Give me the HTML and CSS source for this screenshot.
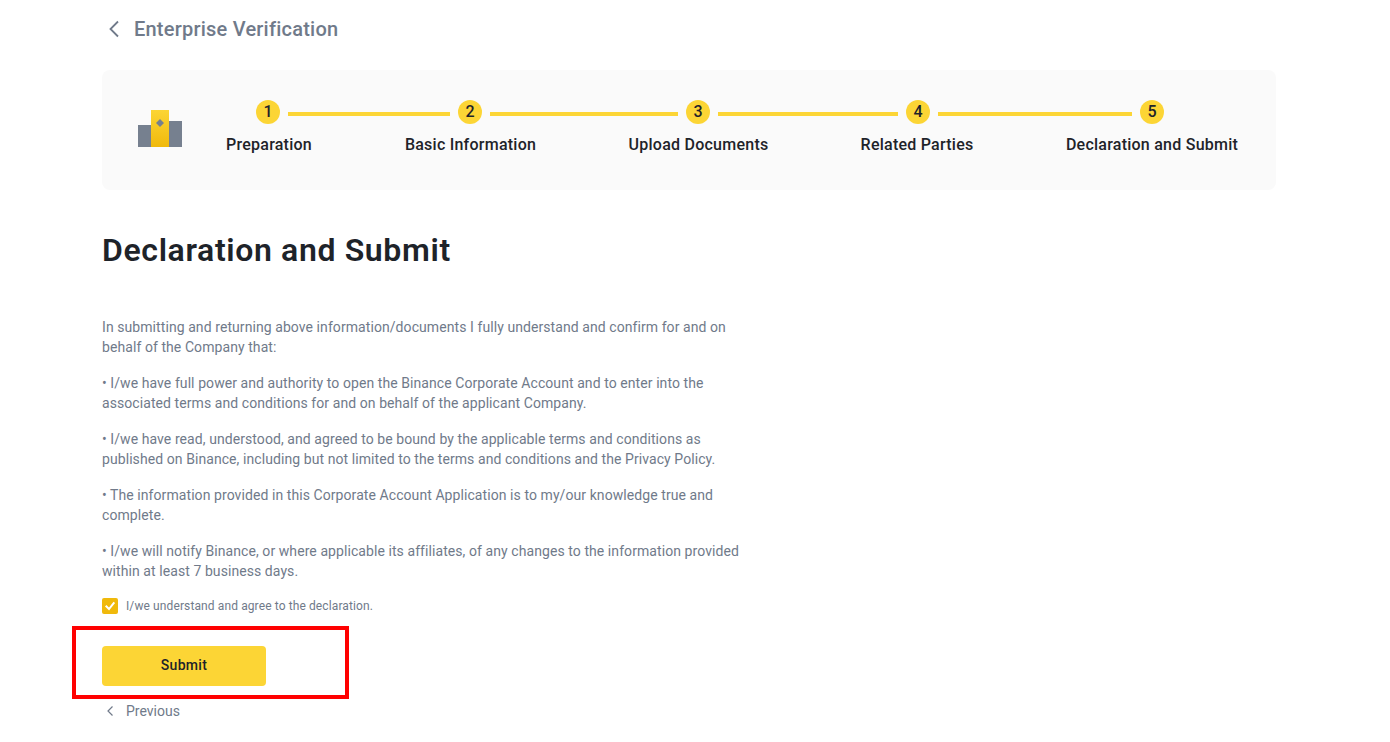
FILE: index.html
```html
<!DOCTYPE html>
<html lang="en">
<head>
<meta charset="utf-8">
<title>Enterprise Verification</title>
<link rel="stylesheet" href="styles.css">
</head>
<body>
<div class="page">
  <header class="top">
    <svg class="back" width="24" height="24" viewBox="0 0 24 24" fill="none"><path d="M16 4.500 8.500 12l7.500 7.500" stroke="#707a8a" stroke-width="1.800"/></svg>
    <span class="top-title">Enterprise Verification</span>
  </header>
  <section class="card">
    <svg class="logo" width="44" height="38" viewBox="0 0 44 38">
      <rect x="0" y="15" width="14" height="22" fill="#76808f"/>
      <rect x="30" y="11" width="14" height="26" fill="#76808f"/>
      <defs><linearGradient id="g" x1="0" y1="0" x2="0" y2="1"><stop offset="0" stop-color="#fcd535"/><stop offset="1" stop-color="#f0b90b"/></linearGradient></defs>
      <rect x="13" y="0" width="18" height="37" fill="url(#g)"/>
      <path d="M22 9 26 13 22 17 18 13Z" fill="#76808f"/>
    </svg>
    <ol class="steps">
      <li class="step s1"><span class="num">1</span><span class="label">Preparation</span></li>
      <li class="step s2"><span class="num">2</span><span class="label">Basic Information</span></li>
      <li class="step s3"><span class="num">3</span><span class="label">Upload Documents</span></li>
      <li class="step s4"><span class="num">4</span><span class="label">Related Parties</span></li>
      <li class="step s5"><span class="num">5</span><span class="label">Declaration and Submit</span></li>
    </ol>
  </section>
  <h1 class="title">Declaration and Submit</h1>
  <div class="copy">
    <p>In submitting and returning above information/documents I fully understand and confirm for and on behalf of the Company that:</p>
    <p>• I/we have full power and authority to open the Binance Corporate Account and to enter into the associated terms and conditions for and on behalf of the applicant Company.</p>
    <p>• I/we have read, understood, and agreed to be bound by the applicable terms and conditions as published on Binance, including but not limited to the terms and conditions and the Privacy Policy.</p>
    <p>• The information provided in this Corporate Account Application is to my/our knowledge true and complete.</p>
    <p>• I/we will notify Binance, or where applicable its affiliates, of any changes to the information provided within at least 7 business days.</p>
  </div>
  <div class="agree">
    <span class="box"><svg width="16" height="16" viewBox="0 0 16 16" fill="none"><path d="M3.700 7.700 7 11l5.300-6.700" stroke="#fff" stroke-width="2"/></svg></span>
    <span>I/we understand and agree to the declaration.</span>
  </div>
  <div class="submit-wrap">
    <button class="submit" type="button">Submit</button>
    <div class="highlight"></div>
  </div>
  <div class="prev">
    <svg width="16" height="16" viewBox="0 0 16 16" fill="none"><path d="M10.500 3.500 6 8l4.500 4.500" stroke="#707a8a" stroke-width="1.200"/></svg>
    <span>Previous</span>
  </div>
</div>
</body>
</html>
```
FILE: styles.css
```css
* { box-sizing: border-box; }
html, body { margin: 0; height: 100%; background: #fff; overflow: hidden; }
body { font-family: Roboto, "Liberation Sans", sans-serif; color: #1e2329; }
.page { width: 1174px; margin-left: 102px; }
.top { height: 70px; display: flex; align-items: center; gap: 8px; padding-bottom: 12px; }
.back { flex: none; }
.top-title { font-size: 20px; font-weight: 500; color: #707a8a; letter-spacing: 0.22px; }
.card { height: 120px; background: #fafafa; border-radius: 8px; display: flex; padding: 30px 0 0 36px; }
.logo { flex: none; margin-top: 10px; }
.steps { list-style: none; margin: 0 0 0 44px; padding: 0; display: grid; grid-template-columns: 86px 131px 139px 112px 172px; column-gap: 93px; align-items: start; }
.step { position: relative; display: flex; flex-direction: column; align-items: center; }
.num { width: 24px; height: 24px; border-radius: 50%; background: #fcd535; font-size: 16px; font-weight: 500; line-height: 24px; text-align: center; }
.label { margin-top: 9px; font-size: 16px; line-height: 24px; font-weight: 500; white-space: nowrap; letter-spacing: 0.24px; }
.step::after { content: ""; position: absolute; top: 12px; height: 4px; background: #fcd535; }
.s1 .num { margin-right: 2px; }
.s2 .num, .s3 .num { margin-right: 1px; }
.s4 .num { margin-left: 2px; }
.s1::after { left: 62px; width: 162px; }
.s2::after { left: 85px; width: 188px; }
.s3::after { left: 89px; width: 180px; }
.s4::after { left: 77px; width: 194px; }
.s5::after { display: none; }
.title { margin: 40px 0 0; font-size: 32px; line-height: 40px; font-weight: 600; letter-spacing: 0.64px; }
.copy { width: 640px; margin-top: 47px; font-size: 14px; line-height: 20px; color: #707a8a; letter-spacing: 0.075px; }
.copy p { margin: 0 0 16px; }
.copy p:last-child { margin-bottom: 0; }
.agree { display: flex; align-items: center; gap: 8px; margin-top: 15px; height: 20px; font-size: 12px; color: #707a8a; letter-spacing: 0.11px; }
.box { width: 16px; height: 16px; border-radius: 2px; background: #f0b90b; display: block; }
.box svg { display: block; }
.submit-wrap { position: relative; margin-top: 30px; height: 40px; }
.submit { width: 164px; height: 40px; border: 0; border-radius: 4px; background: #fcd535; color: #1e2329; font: 500 14px Roboto, sans-serif; letter-spacing: 0.3px; padding: 0 0 2px; }
.highlight { position: absolute; left: -30px; top: -20px; width: 277px; height: 73px; border: 4px solid #f00; }
.prev { display: flex; align-items: center; gap: 8px; margin-top: 15px; height: 20px; font-size: 14px; color: #707a8a; }
```
